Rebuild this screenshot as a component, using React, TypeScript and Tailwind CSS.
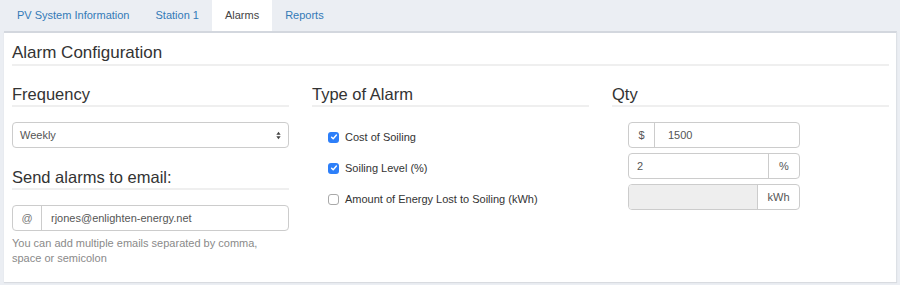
import { useState } from "react";

const tabs = ["PV System Information", "Station 1", "Alarms", "Reports"];

function Heading({ children, size = "text-[16.5px]" }: { children: React.ReactNode; size?: string }) {
  return (
    <div className={`${size} leading-[20px] text-[#333] border-b-2 border-[#efefef] pb-[1px]`}>{children}</div>
  );
}

function Check({ checked, label }: { checked: boolean; label: string }) {
  return (
    <label className="flex items-center h-[20px] pl-[16px] gap-[6px] text-[11px] text-[#333] cursor-pointer">
      {checked ? (
        <span className="w-[11px] h-[11px] rounded-[3px] bg-[#2d7ff9] flex items-center justify-center">
          <svg viewBox="0 0 10 10" className="w-[8px] h-[8px]" fill="none" stroke="white" strokeWidth="1.8" strokeLinecap="round" strokeLinejoin="round">
            <path d="M2 5.2l2 2 4-4.6" />
          </svg>
        </span>
      ) : (
        <span className="w-[11px] h-[11px] rounded-[3px] bg-white border border-[#a9a9a9]" />
      )}
      <span>{label}</span>
    </label>
  );
}

export default function App() {
  const [active] = useState("Alarms");

  return (
    <div className="w-[900px] h-[285px] bg-[#ebeef3] font-['Liberation_Sans',Arial,sans-serif]">
      {/* Tabs */}
      <div className="flex h-[31px] pl-[4px]">
        {tabs.map((t) => (
          <div
            key={t}
            className={`h-[31px] px-[13px] flex items-center text-[11px] ${
              t === active ? "bg-white text-[#444]" : "text-[#337ab7]"
            }`}
          >
            {t}
          </div>
        ))}
      </div>

      {/* Panel */}
      <div className="mx-[4px] mr-[3px] bg-white border-t-2 border-[#d3d7de] border-r border-r-[#dde1e6] shadow-[0_1px_1px_rgba(0,0,0,0.08)] pl-[8px] pr-[7px] pt-[10px] pb-[16px]">
        <Heading size="text-[17px]">Alarm Configuration</Heading>

        <div className="grid grid-cols-3 gap-x-[23px] mt-[18px]">
          {/* Frequency + email */}
          <div>
            <Heading>Frequency</Heading>
            <div className="mt-[15px] h-[26px] border border-[#ccc] rounded-[4px] flex items-center justify-between px-[7px] text-[11px] text-[#555]">
              <span>Weekly</span>
              <svg viewBox="0 0 6 10" className="w-[5px] h-[9px]" fill="#444">
                <path d="M3 0.5L5.6 4H0.4z" />
                <path d="M3 9.5L5.6 6H0.4z" />
              </svg>
            </div>

            <div className="mt-[19px]">
              <Heading>Send alarms to email:</Heading>
            </div>
            <div className="mt-[15px] h-[26px] flex border border-[#ccc] rounded-[4px] text-[11px] text-[#555]">
              <div className="w-[29px] flex items-center justify-center border-r border-[#ccc] text-[#777]">@</div>
              <div className="flex items-center pl-[9px]">rjones@enlighten-energy.net</div>
            </div>
            <p className="mt-[5px] text-[11px] leading-[15px] text-[#8a8a8a]">
              You can add multiple emails separated by comma,
              <br />
              space or semicolon
            </p>
          </div>

          {/* Type of alarm */}
          <div>
            <Heading>Type of Alarm</Heading>
            <div className="mt-[20px] flex flex-col gap-[11px]">
              <Check checked label="Cost of Soiling" />
              <Check checked label="Soiling Level (%)" />
              <Check checked={false} label="Amount of Energy Lost to Soiling (kWh)" />
            </div>
          </div>

          {/* Qty */}
          <div>
            <Heading>Qty</Heading>
            <div className="mt-[15px] ml-[16px] w-[172px] flex flex-col gap-[5px] text-[11px] text-[#555]">
              <div className="h-[26px] flex border border-[#ccc] rounded-[4px]">
                <div className="w-[26px] flex items-center justify-center border-r border-[#ccc]">$</div>
                <div className="flex items-center pl-[13px]">1500</div>
              </div>
              <div className="h-[26px] flex border border-[#ccc] rounded-[4px]">
                <div className="flex-1 flex items-center pl-[8px]">2</div>
                <div className="w-[31px] flex items-center justify-center border-l border-[#ccc]">%</div>
              </div>
              <div className="h-[26px] flex border border-[#ccc] rounded-[4px] overflow-hidden">
                <div className="flex-1 bg-[#eeeeee]" />
                <div className="w-[42px] flex items-center justify-center border-l border-[#ccc]">kWh</div>
              </div>
            </div>
          </div>
        </div>
      </div>
    </div>
  );
}
